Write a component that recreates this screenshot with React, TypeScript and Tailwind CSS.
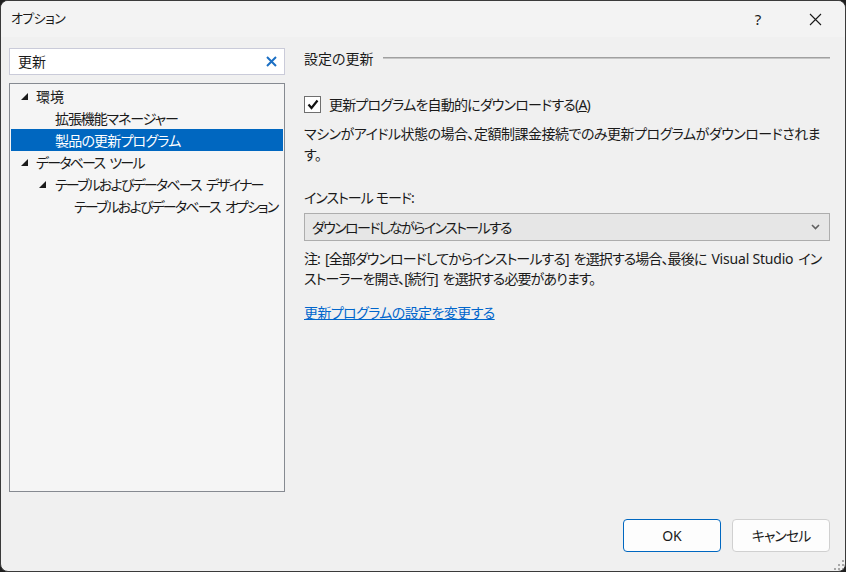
import React from 'react';

const jp = "font-['Noto_Sans','Noto_Sans_CJK_JP',sans-serif] [font-feature-settings:'palt']";

interface TreeRow {
    label: string;
    pad: string;
    track: string;
    expander?: string;
    selected?: boolean;
}

const rows: TreeRow[] = [
    { label: '環境', pad: 'pl-[10px]', track: 'tracking-[0px]', expander: 'w-[15px]' },
    { label: '拡張機能マネージャー', pad: 'pl-[44px]', track: 'tracking-[-1.1px]' },
    { label: '製品の更新プログラム', pad: 'pl-[44px]', track: 'tracking-[-0.8px]', selected: true },
    { label: 'データベース ツール', pad: 'pl-[10px]', track: 'tracking-[-1.8px]', expander: 'w-[15px]' },
    { label: 'テーブルおよびデータベース デザイナー', pad: 'pl-[28px]', track: 'tracking-[-1.8px]', expander: 'w-[16px]' },
    { label: 'テーブルおよびデータベース オプション', pad: 'pl-[63px]', track: 'tracking-[-1.8px]' },
];

const Expander = ({ width }: { width: string }) => (
    <span className={`${width} flex items-center shrink-0`}>
        <svg width="7" height="7" viewBox="0 0 7 7">
            <polygon points="7,0 7,7 0,7" fill="#1a1a1a" />
        </svg>
    </span>
);

// spaces get eaten by the negative tracking, so put a fixed gap instead
const Gap = () => <span className="inline-block w-[5px]" />;

const Spaced = ({ text }: { text: string }) => (
    <>
        {text.split(' ').map((part, i) => (
            <React.Fragment key={i}>
                {i > 0 && <Gap />}
                {part}
            </React.Fragment>
        ))}
    </>
);

const App: React.FC = () => {
    return (
        <div className="w-[846px] h-[572px] bg-[#1f1f1f]">
            <div
                className={`relative w-full h-full flex flex-col bg-[#f0f0f0] border border-[#3a3a3a] rounded-[8px] overflow-hidden text-[#1a1a1a] ${jp}`}
            >
                {/* title bar */}
                <div className="h-[36px] flex items-center bg-[#f3f3f3] shrink-0">
                    <span className="pl-[10px] text-[13px] tracking-[-0.6px]">オプション</span>
                    <div className="ml-auto flex items-center h-full">
                        <span className="w-[46px] text-center text-[15px]">?</span>
                        <span className="w-[46px] ml-[11px] mr-[7px] flex justify-center">
                            <svg width="13" height="13" viewBox="0 0 13 13">
                                <path d="M1 1 L12 12 M12 1 L1 12" stroke="#1a1a1a" strokeWidth="1.1" />
                            </svg>
                        </span>
                    </div>
                </div>

                <div className="flex flex-1 pl-[8px]">
                    {/* left column */}
                    <div className="w-[276px] pt-[11px] flex flex-col">
                        <div className="h-[27px] flex items-center bg-white border border-[#cacbd9] pl-[8px] pr-[7px]">
                            <span className="text-[14px]">更新</span>
                            <svg className="ml-auto" width="11" height="11" viewBox="0 0 11 11">
                                <path d="M1 1 L10 10 M10 1 L1 10" stroke="#1b6fc4" strokeWidth="2" />
                            </svg>
                        </div>
                        <div className="mt-[8px] h-[409px] bg-[#f5f5f5] border border-[#868a91] pt-[1px]">
                            {rows.map((r) => (
                                <div
                                    key={r.label}
                                    className={`h-[22px] mx-px flex items-center text-[14px] whitespace-nowrap ${r.pad} ${
                                        r.selected ? 'bg-[#0067c0] text-white' : ''
                                    }`}
                                >
                                    {r.expander && <Expander width={r.expander} />}
                                    <span className={r.track}>
                                        <Spaced text={r.label} />
                                    </span>
                                </div>
                            ))}
                        </div>
                    </div>

                    {/* right column */}
                    <div className="ml-[19px] w-[526px] pt-[11px] text-[14px]">
                        <div className="h-[20px] flex items-center">
                            <span>設定の更新</span>
                            <div className="flex-1 ml-[9px] flex flex-col">
                                <div className="h-px bg-[#a0a0a0]" />
                                <div className="h-px bg-[#c6c6c6]" />
                            </div>
                        </div>

                        <div className="mt-[26px] h-[20px] flex items-center">
                            <span className="w-[17px] h-[17px] bg-white border border-[#6f6f6f] flex items-center justify-center">
                                <svg width="12" height="11" viewBox="0 0 12 11">
                                    <path d="M1.5 5.5 L4.5 9 L10.5 1.5" fill="none" stroke="#111" strokeWidth="2.2" />
                                </svg>
                            </span>
                            <span className="ml-[8px] tracking-[-0.8px]">
                                更新プログラムを自動的にダウンロードする(<span className="underline">A</span>)
                            </span>
                        </div>

                        <p className="mt-[9px] leading-[21px] tracking-[-0.5px]">
                            マシンがアイドル状態の場合、定額制課金接続でのみ更新プログラムがダウンロードされま
                            <br />
                            す。
                        </p>

                        <p className="mt-[23px] leading-[20px] tracking-[-1px]">
                            インストール<span className="inline-block w-[3px]" />モード:
                        </p>

                        <div className="mt-[5px] h-[28px] flex items-center bg-[#e6e6e6] border border-[#adadad] pl-[7px] pr-[9px]">
                            <span className="tracking-[-1.6px]">ダウンロードしながらインストールする</span>
                            <svg className="ml-auto" width="9" height="6" viewBox="0 0 9 6">
                                <path d="M1 1 L4.5 4.5 L8 1" fill="none" stroke="#606060" strokeWidth="1.6" />
                            </svg>
                        </div>

                        <p className="mt-[8px] leading-[20px] tracking-[-0.9px] whitespace-nowrap">
                            注:<Gap />[全部ダウンロードしてからインストールする]<Gap />を選択する場合、最後に<Gap />
                            <span className="tracking-[-0.2px]">Visual Studio</span>
                            <Gap />イン
                            <br />
                            ストーラーを開き、[続行]<Gap />を選択する必要があります。
                        </p>

                        <p className="mt-[14px] leading-[20px] tracking-[-0.6px]">
                            <span className="text-[#0066cc] underline">更新プログラムの設定を変更する</span>
                        </p>
                    </div>
                </div>

                {/* footer */}
                <div className="flex justify-end gap-[11px] pr-[15px] pb-[19px] shrink-0">
                    <button className="w-[98px] h-[33px] rounded-[4px] bg-[#fdfdfd] border border-[#0067c0] text-[14px]">
                        OK
                    </button>
                    <button className="w-[98px] h-[33px] rounded-[4px] bg-[#fdfdfd] border border-[#d0d0d0] text-[14px] tracking-[-1px]">
                        キャンセル
                    </button>
                </div>

                {/* resize grip */}
                <svg className="absolute right-[1px] bottom-[1px]" width="10" height="10" viewBox="0 0 10 10">
                    <rect x="8" y="0" width="2" height="2" fill="#a8a8a8" />
                    <rect x="4" y="4" width="2" height="2" fill="#a8a8a8" />
                    <rect x="8" y="4" width="2" height="2" fill="#a8a8a8" />
                    <rect x="0" y="8" width="2" height="2" fill="#a8a8a8" />
                    <rect x="4" y="8" width="2" height="2" fill="#a8a8a8" />
                    <rect x="8" y="8" width="2" height="2" fill="#a8a8a8" />
                </svg>
            </div>
        </div>
    );
};

export default App;
